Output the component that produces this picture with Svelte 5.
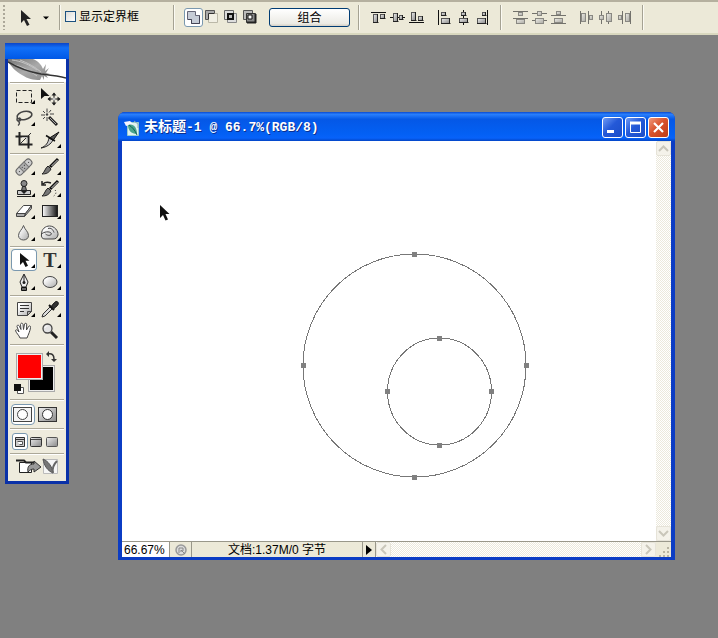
<script>
  const tri = '<path d="M24 15v4h-4z" fill="#000"/>';
  const brush = '<path d="M21 3l-8 8" stroke="#111" stroke-width="3"/><path d="M20.500 4l-6 6" stroke="#ddd"/><path d="M11 10l3 3c-2 4-5 5-9 5 3-2 3-6 6-8z" fill="#777" stroke="#222"/>';

  const tools = [
    [
      { name: '矩形选框', art: '<rect x="5.500" y="5.500" width="15" height="12" fill="none" stroke="#222" stroke-dasharray="4 2"/>' + tri },
      { name: '移动', art: '<path d="M4 3v11l3.500-3h5z" fill="#111"/><path d="M17 8v12M11 14h12" stroke="#111"/><path d="M17 7.500l-2.500 3h5zM17 20.500l-2.500-3h5zM10.500 14l3-2.500v5zM23.500 14l-3-2.500v5z" fill="#222"/><path d="M15.500 14h3M17 12.500v3" stroke="#eee"/>' },
      { name: '套索', art: '<ellipse cx="13.500" cy="8.500" rx="7.500" ry="4" transform="rotate(-12 13.500 8.500)" fill="none" stroke="#444" stroke-width="1.600"/><path d="M7 11c-2 1-1 3 1 3s2-3 0-3M7 14c2 1 2 3 0 4.500" fill="none" stroke="#444" stroke-width="1.400"/>' + tri },
      { name: '魔棒', art: '<path d="M12 10l8 8" stroke="#222" stroke-width="3"/><path d="M13 11l6 6" stroke="#aaa"/><path d="M10 1.500v4M10 10v4M4 8h4M13 7h4M6 4l2 2M14 3l-2 2.500M6 12l2-2" stroke="#444"/><circle cx="10" cy="7.500" r="1.200" fill="#444"/>' },
      { name: '裁剪', art: '<path d="M8.500 3v12.500h13M4.500 7.500h13v12" fill="none" stroke="#222" stroke-width="2"/><path d="M20 4L9 15" stroke="#333"/><path d="M11 8.500h5v5" fill="none" stroke="#bbb"/>' },
      { name: '切片', art: '<path d="M4 19c6-1 10-4 12-8l-4-2c-1 5-3 8-8 10z" fill="#ccc" stroke="#222"/><path d="M12.500 9l3.500 2.500L22 3z" fill="#555" stroke="#111"/><path d="M9 6.500l9 5.500" stroke="#111" stroke-width="1.500"/>' + tri }
    ],
    [
      { name: '修复画笔', art: '<g transform="rotate(-45 13 11)"><rect x="3.500" y="7.500" width="19" height="7" rx="3" fill="#ccc" stroke="#666"/><rect x="9.500" y="7.500" width="7" height="7" fill="#b0b0b0" stroke="#777"/><path d="M6 11h1M11 10h1M14 10h1M12 12.500h1M19 11h1" stroke="#333"/></g>' + tri },
      { name: '画笔', art: brush + tri },
      { name: '仿制图章', art: '<circle cx="13" cy="5.500" r="3" fill="#888" stroke="#222"/><path d="M11.500 8.500h3l1 4h-5z" fill="#777" stroke="#222"/><path d="M6.500 12.500h13v4h-13z" fill="#ccc" stroke="#222"/><path d="M6 18.500h14" stroke="#222"/><path d="M10 13h6l-3 3z" fill="#222"/>' + tri },
      { name: '历史记录画笔', art: brush + '<path d="M14 5c-3-1-6-1-8 1M5 3v4h4" fill="none" stroke="#222" stroke-width="1.500"/><path d="M18 12c2 2 1 5-3 7" fill="none" stroke="#222" stroke-dasharray="1 2"/>' + tri },
      { name: '橡皮擦', art: '<path d="M5.500 13.500l7-8h8l-6 8z" fill="#fff" stroke="#444"/><path d="M5.500 13.500v3h8l1-3zM14.500 13.500l6-8v3l-7 8z" fill="#aaa" stroke="#444"/>' + tri },
      { name: '渐变', art: '<rect x="5.500" y="5.500" width="15" height="11" fill="url(#ramp)" stroke="#222"/>' + tri },
      { name: '模糊', art: '<path d="M12.500 3.500c1 4 5 6 5 10 0 6-10 6-10 0 0-4 4-6 5-10z" fill="url(#ball)" stroke="#555"/>' + tri },
      { name: '海绵', art: '<path d="M4.500 12c0-5 4-8 8-8 5 0 9 5 8.500 9-1 3-2 4-5 4H8c-3 0-4-2-3.500-5z" fill="url(#ball)" stroke="#444"/><path d="M5 11.500c4-2.500 9-2 9.500.5-1.500 2.500-5 1-6 0M11 6.500c3-1 5 1 6 4" fill="none" stroke="#444"/>' + tri }
    ],
    [
      { name: '路径选择', active: true, art: '<path d="M9 4v12l3-3 2.500 5 2.500-1.200-2.500-5h4z" fill="#111"/>' + tri },
      { name: '文字', letter: 'T', art: tri },
      { name: '钢笔', art: '<path d="M13 3c-1 3-3 5-4 8l2 5h4l2-5c-1-3-3-5-4-8z" fill="#eee" stroke="#222"/><path d="M13 4v7" stroke="#222"/><circle cx="13" cy="11.500" r="1.500" fill="#222"/><path d="M10.500 16.500h5v3h-5z" fill="#666" stroke="#111"/>' + tri },
      { name: '椭圆', art: '<ellipse cx="13" cy="11" rx="7" ry="5.500" fill="url(#ball)" stroke="#444"/>' + tri }
    ],
    [
      { name: '注释', art: '<path d="M6.500 4.500h14v9l-4 4h-10z" fill="url(#ball)" stroke="#444"/><path d="M9 7.500h9M9 10.500h9M9 13.500h4" stroke="#333"/><path d="M16.500 17.500v-4h4z" fill="#aaa" stroke="#444"/>' + tri },
      { name: '吸管', art: '<path d="M5 19l1-3 7-7 2 2-7 7z" fill="#ddd" stroke="#333"/><path d="M12 7l5 5" stroke="#111" stroke-width="2"/><path d="M14.500 8l3-3.500c2-2.500 5.500 0 3 3L17 10.500z" fill="#333" stroke="#111"/>' + tri },
      { name: '抓手', art: '<path d="M9 18c-1-3-4-5-4.500-7.500.5-1.500 2-.5 3.500 1.500L6 6.500C6 4.500 8 5 8.500 6.500L10 9.500l-.5-5c.5-2 2.200-1.500 2.500 0l.5 5 1-5.500c.8-1.500 2.500-.8 2.200.8L15.500 10l2-3.500c1-1.200 2.500-.5 2 1-.5 4-2 6.500-3.500 10.500z" fill="#fff" stroke="#444"/>' },
      { name: '缩放', art: '<path d="M14 12l6 6" stroke="#222" stroke-width="3"/><circle cx="10.500" cy="8.500" r="4.500" fill="#e4e4e4" stroke="#444" stroke-width="1.300"/><path d="M8 8c0-1.500 1-2 2.500-2" fill="none" stroke="#fff"/>' }
    ]
  ];

  const box = (x, y, w, h) => `<rect x="${x}.500" y="${y}.500" width="${w}" height="${h}" fill="url(#metal)" stroke="#555"/>`;
  const shade = (x, y, w, h) => `<path d="M${x} ${y + h}.500h${w + 1}.500M${x + w}.500 ${y}v${h + 1}" stroke="#222"/>`;

  const combine = [
    { name: '添加到形状区域', active: true, art: '<path d="M2.500 2.500h8v4h4v8h-8v-4h-4z" fill="#c6ccd6" stroke="#667"/><path d="M3 10.500h3.500v4h8v-8" fill="none" stroke="#445"/>' },
    { name: '从形状区域减去', art: '<path d="M1.500 1.500h9v3h-6v6h-3z" fill="#aaa" stroke="#555"/><path d="M4.500 4.500h9v9h-9z" fill="#f1efe4" stroke="#bbb8a8"/><path d="M4.500 10.500v-6h6" fill="none" stroke="#333"/>' },
    { name: '交叉形状区域', art: '<path d="M1.500 1.500h9v9h-9z" fill="#ddd" stroke="#666"/><path d="M4.500 4.500h9v9h-9z" fill="#ddd" stroke="#888"/><path d="M5 5h5v5H5z" fill="#bbb" stroke="#111" stroke-width="2"/>' },
    { name: '重叠形状区域除外', art: '<path d="M1.500 1.500h9v9h-9z" fill="#bbb" stroke="#555"/><path d="M4.500 4.500h9v9h-9z" fill="#888" stroke="#333"/><path d="M6 6h4v4H6z" fill="#fff" stroke="#111"/><path d="M5 13.500h9M13.500 5v9" stroke="#222" stroke-width="2"/>' }
  ];

  const alignGroups = [
    [
      { name: '顶对齐', art: '<path d="M1 3.500h15" stroke="#111"/>' + box(3, 5, 4, 8) + shade(3, 5, 4, 8) + box(10, 5, 4, 4) + shade(10, 5, 4, 4) },
      { name: '垂直居中对齐', art: '<path d="M1 8.500h15" stroke="#111"/>' + box(4, 4, 4, 8) + shade(4, 4, 4, 8) + box(10, 6, 3, 4) + shade(10, 6, 3, 4) },
      { name: '底对齐', art: '<path d="M1 13.500h15" stroke="#111"/>' + box(3, 3, 4, 8) + shade(3, 3, 4, 8) + box(10, 7, 4, 4) + shade(10, 7, 4, 4) }
    ],
    [
      { name: '左对齐', art: '<path d="M2.500 1v15" stroke="#111"/>' + box(5, 3, 4, 3) + shade(5, 3, 4, 3) + box(5, 9, 8, 5) + shade(5, 9, 8, 5) },
      { name: '水平居中对齐', art: '<path d="M8.500 1v15" stroke="#111"/>' + box(6, 3, 4, 3) + shade(6, 3, 4, 3) + box(4, 9, 8, 4) + shade(4, 9, 8, 4) },
      { name: '右对齐', art: '<path d="M13.500 1v15" stroke="#111"/>' + box(8, 3, 3, 3) + shade(8, 3, 3, 3) + box(3, 9, 8, 5) + shade(3, 9, 8, 5) }
    ]
  ];

  const distributeGroups = [
    [
      { name: '按顶分布', art: '<path d="M1 2.500h15M1 9.500h15" stroke="#333"/>' + box(6, 3, 4, 3) + box(4, 10, 8, 4) },
      { name: '垂直居中分布', art: '<path d="M1 4.500h15M1 11.500h15" stroke="#333"/>' + box(6, 2, 4, 4) + box(4, 9, 8, 5) },
      { name: '按底分布', art: '<path d="M1 6.500h15M1 14.500h15" stroke="#333"/>' + box(6, 2, 4, 3) + box(4, 9, 8, 4) }
    ],
    [
      { name: '按左分布', art: '<path d="M2.500 2v13M10.500 2v13" stroke="#333"/>' + box(3, 4, 4, 8) + box(11, 6, 3, 4) },
      { name: '水平居中分布', art: '<path d="M4.500 2v13M11.500 2v13" stroke="#333"/>' + box(2, 6, 4, 4) + box(9, 4, 5, 8) },
      { name: '按右分布', art: '<path d="M6.500 2v13M14.500 2v13" stroke="#333"/>' + box(2, 6, 3, 4) + box(9, 4, 4, 8) }
    ]
  ];

  const anchors = [
    [292, 113], [181, 224], [404, 224], [292, 336],
    [317, 197], [265, 250], [369, 250], [317, 304]
  ];

  let showBounds = $state(false);
  let zoom = $state('66.67%');
</script>

{#snippet iconGroup(items, dim)}
  <div class="group" class:dim>
    {#each items as item}
      <button class="op" class:active={item.active} aria-label={item.name} disabled={dim}>
        <svg width="17" height="17" viewBox="0 0 17 17" fill="none">{@html item.art}</svg>
      </button>
    {/each}
  </div>
{/snippet}

<svg class="defs" width="0" height="0" aria-hidden="true">
  <defs>
    <linearGradient id="ramp"><stop offset="0" stop-color="#fff" /><stop offset="1" stop-color="#111" /></linearGradient>
    <linearGradient id="metal" x1="0" y1="0" x2="1" y2="1"><stop offset="0" stop-color="#eee" /><stop offset="1" stop-color="#888" /></linearGradient>
    <linearGradient id="ball" x1="0" y1="0" x2="1" y2="1"><stop offset="0.2" stop-color="#fff" /><stop offset="1" stop-color="#aaa" /></linearGradient>
    <linearGradient id="vane" x1="0" y1="0" x2="1" y2="1"><stop offset="0" stop-color="#777" /><stop offset="0.5" stop-color="#aaa" /><stop offset="1" stop-color="#888" /></linearGradient>
  </defs>
</svg>

<div class="app">
  <header class="options">
    <span class="grip"></span>
    <button class="preset" aria-label="工具预设">
      <svg width="32" height="18" viewBox="0 0 32 18">
        <path d="M2 1v13l3-3 3 6 2.500-1.200-3-5.800h4.500z" fill="#222" />
        <path d="M24 7.500h6l-3 3z" fill="#000" />
      </svg>
    </button>
    <span class="sep"></span>
    <label class="check"><input type="checkbox" bind:checked={showBounds} />显示定界框</label>
    <span class="sep"></span>
    {@render iconGroup(combine, false)}
    <button class="merge">组合</button>
    <span class="sep"></span>
    {#each alignGroups as g}{@render iconGroup(g, false)}{/each}
    <span class="sep"></span>
    {#each distributeGroups as g}{@render iconGroup(g, true)}{/each}
    <span class="sep"></span>
  </header>

  <main class="desk">
    <aside class="toolbox">
      <div class="tbar"></div>
      <svg class="feather" width="58" height="23" viewBox="0 0 58 23">
        <rect width="58" height="23" fill="#fff" />
        <path d="M0 0h25c5 2 8 5 10 10l3-5-1 7 4-3-3 5 4 1-4 1 2 3-4-2v4l-2-4-2 4c-7 0-12-1-18-5C7 12 4 8 0 3z" fill="url(#vane)" />
        <path d="M6 6c7 1 15 5 23 11M12 1c8 3 15 7 21 12M4 1c9 1 18 5 25 10" fill="none" stroke="#c4c4c4" />
        <path d="M0 3c10 6 20 10 33 12 8 1 17 2 25 4" fill="none" stroke="#333" stroke-width="1.500" />
      </svg>
      {#each tools as section}
        <div class="section grid">
          {#each section as tool}
            <button class="tool" class:on={tool.active} aria-label={tool.name}>
              {#if tool.letter}<span class="letter">{tool.letter}</span>{/if}
              <svg width="26" height="22" viewBox="0 0 26 22" fill="none">{@html tool.art}</svg>
            </button>
          {/each}
        </div>
      {/each}
      <div class="section colors">
        <button class="swatch back" aria-label="背景色"></button>
        <button class="swatch fore" aria-label="前景色"></button>
        <button class="swap" aria-label="切换颜色">
          <svg width="11" height="11" viewBox="0 0 11 11"><path d="M2 3c4-1 6 1 6 5" fill="none" stroke="#333" stroke-width="1.500" /><path d="M0 3l3-3v6zM8 11L5 8h6z" fill="#333" /></svg>
        </button>
        <button class="reset" aria-label="默认颜色">
          <svg width="11" height="11" viewBox="0 0 11 11"><path d="M3.500 3.500h6v6h-6z" fill="#fff" stroke="#555" /><path d="M0 0h7v7H0z" fill="#111" /></svg>
        </button>
      </div>
      <div class="section masks">
        <button class="mask on" aria-label="标准模式">
          <svg width="20" height="15" viewBox="0 0 20 15"><rect x=".5" y=".5" width="18" height="14" fill="#f4f4f4" stroke="#444" /><circle cx="9.500" cy="7.500" r="5" fill="#fff" stroke="#444" /></svg>
        </button>
        <button class="mask" aria-label="快速蒙版模式">
          <svg width="20" height="15" viewBox="0 0 20 15"><rect x=".5" y=".5" width="18" height="14" fill="url(#metal)" stroke="#333" /><circle cx="9.500" cy="7.500" r="5" fill="#fff" stroke="#333" /></svg>
        </button>
      </div>
      <div class="section modes">
        <button class="mode on" aria-label="标准屏幕模式">
          <svg width="12" height="12" viewBox="0 0 12 12"><path d="M1.500 1.500h9v9h-9z" fill="#ccc" stroke="#333" /><path d="M2 3.500h8" stroke="#333" /><path d="M3.500 5.500h5v3h-3" fill="#fff" stroke="#555" /></svg>
        </button>
        <button class="mode" aria-label="带菜单栏的全屏模式">
          <svg width="12" height="12" viewBox="0 0 12 12"><rect x=".5" y="1.500" width="11" height="9" rx="1" fill="url(#metal)" stroke="#333" /><path d="M1 3.500h10" stroke="#444" /></svg>
        </button>
        <button class="mode" aria-label="全屏模式">
          <svg width="12" height="12" viewBox="0 0 12 12"><rect x=".5" y="1.500" width="11" height="9" rx="1" fill="url(#metal)" stroke="#555" /></svg>
        </button>
      </div>
      <div class="section jump">
        <button aria-label="在 ImageReady 中编辑">
          <svg width="44" height="18" viewBox="0 0 44 18">
            <path d="M4.500 4.500h12v10h-12z" fill="#fff" stroke="#222" />
            <path d="M1 2.500h8l2 2h9" fill="none" stroke="#222" stroke-width="2" />
            <path d="M13 14c-1-5 1-8 6-8V3l7 6-7 5v-3c-3 0-4 1-6 3z" fill="#999" stroke="#333" />
            <path d="M28.500 1.500h14v14h-14z" fill="#f6f6f6" stroke="#bbb" />
            <path d="M28 1c5 2 9 7 10 14-5-2-9-7-10-14z" fill="#777" stroke="#555" />
            <path d="M38 15c-1-4 0-8 4-12" fill="none" stroke="#666" stroke-width="2" />
          </svg>
        </button>
      </div>
    </aside>

    <section class="window">
      <div class="title">
        <svg width="16" height="16" viewBox="0 0 16 16">
          <path d="M3.500 2.500h11v13h-11z" fill="#dff2ee" stroke="#9cc" /><path d="M0 2l6-1 3 3-7 2z" fill="#f5f5ff" />
          <path d="M4 5c5-2 9 2 9 9-6 0-9-4-9-9z" fill="#4aa58c" /><path d="M5 5c3 2 6 5 8 10" fill="none" stroke="#146054" />
          <path d="M10 1l4 3v4" fill="none" stroke="#8ab" />
        </svg>
        <h1><span>未标题</span>-1 @ 66.7%(RGB/8)</h1>
        <button class="wb" aria-label="最小化"><svg width="19" height="19" viewBox="0 0 19 19"><path d="M4 12h7v3H4z" fill="#fff" /></svg></button>
        <button class="wb" aria-label="最大化"><svg width="19" height="19" viewBox="0 0 19 19"><path d="M4.500 5h10v9.500h-10z" fill="none" stroke="#fff" /><path d="M4 5h11" stroke="#fff" stroke-width="3" /></svg></button>
        <button class="wb close" aria-label="关闭"><svg width="19" height="19" viewBox="0 0 19 19"><path d="M5 5l9 9M14 5l-9 9" stroke="#fff" stroke-width="2.200" /></svg></button>
      </div>
      <div class="body">
        <div class="canvas">
          <svg width="500" height="380" viewBox="0 0 500 380" fill="none">
            <g stroke="#777" shape-rendering="crispEdges">
              <circle cx="292.500" cy="224.500" r="111.500" />
              <ellipse cx="317.500" cy="250.500" rx="52" ry="53.500" />
            </g>
            {#each anchors as [x, y]}
              <rect x={x - 2} y={y - 2} width="5" height="5" fill="#808080" />
            {/each}
            <path d="M38 64v13l3-3 2.500 5.500 2.500-1-2.500-5.500h4z" fill="#111" />
          </svg>
        </div>
        <div class="vscroll">
          <button class="sb" disabled aria-label="向上滚动"><svg width="11" height="11" viewBox="0 0 11 11"><path d="M1 8l4.500-4.500L10 8" /></svg></button>
          <button class="sb" disabled aria-label="向下滚动"><svg width="11" height="11" viewBox="0 0 11 11"><path d="M1 3l4.500 4.500L10 3" /></svg></button>
        </div>
      </div>
      <footer class="status">
        <input class="zoom" type="text" aria-label="缩放比例" bind:value={zoom} />
        <button class="cell info" aria-label="版本状态"><svg width="12" height="12" viewBox="0 0 12 12"><circle cx="6" cy="6" r="5" fill="#ddd" stroke="#999" stroke-width="1.500" /><path d="M4 9V4h4v3H5M6 6l4 4" fill="none" stroke="#888" /></svg></button>
        <span class="doc">文档:1.37M/0 字节</span>
        <button class="cell more" aria-label="状态栏选项"><svg width="6" height="10" viewBox="0 0 6 10"><path d="M0 0l6 5-6 5z" /></svg></button>
        <div class="hscroll">
          <button class="sb" disabled aria-label="向左滚动"><svg width="11" height="11" viewBox="0 0 11 11"><path d="M8 1L3.500 5.500 8 10" /></svg></button>
          <button class="sb" disabled aria-label="向右滚动"><svg width="11" height="11" viewBox="0 0 11 11"><path d="M3 1l4.500 4.500L3 10" /></svg></button>
        </div>
        <svg class="corner" width="15" height="15" viewBox="0 0 15 15"><path d="M11 5h2v2h-2zM11 9h2v2h-2zM11 13h2v2h-2zM7 9h2v2H7zM7 13h2v2H7zM3 13h2v2H3z" fill="#b8b4a2" /></svg>
      </footer>
    </section>
  </main>
</div>

<style>
  :global(body) { margin: 0; background: #808080; }
  .app {
    min-height: 100vh;
    display: flex;
    flex-direction: column;
    font: 12px/16px "Liberation Sans", "Noto Sans CJK SC", sans-serif;
    color: #000;
  }
  .defs { position: absolute; }
  button, input { font: inherit; color: inherit; margin: 0; padding: 0; box-sizing: border-box; }
  button { border: 0; background: none; display: flex; align-items: center; justify-content: center; }
  svg { display: block; flex: none; }

  .options {
    height: 35px;
    box-sizing: border-box;
    display: flex;
    align-items: center;
    padding-left: 3px;
    background: #ece9d8;
    border-top: 2px solid #b5b09f;
    border-bottom: 2px solid #d9d8bf;
    white-space: nowrap;
  }
  .grip { width: 2px; height: 25px; background: repeating-linear-gradient(#aca899 0 2px, transparent 2px 4px); }
  .preset { margin-left: 14px; width: 32px; }
  .sep { width: 1px; height: 25px; background: #a5a293; box-shadow: 1px 0 #fbfaf3; margin-left: 8px; }
  .check { display: flex; align-items: center; gap: 3px; padding: 0 26px 2px 5px; }
  .check input { appearance: none; width: 11px; height: 11px; border: 1px solid #1c5180; background: linear-gradient(135deg, #dcdcd7, #fff); }
  .check input:checked { background: #21a121; }
  .group { display: flex; margin-left: 9px; }
  .sep + .group { margin-left: 10px; }
  .op { width: 19px; height: 19px; border: 1px solid transparent; border-radius: 3px; }
  .op.active { background: #fff; border-color: #7a98af; }
  .dim { opacity: 0.65; }
  .merge {
    width: 81px;
    height: 19px;
    margin-left: 9px;
    border: 1px solid #003c74;
    border-radius: 3px;
    background: linear-gradient(#fff, #ecebe5 85%, #d6d0c5);
  }

  .desk { flex: 1; position: relative; min-height: 600px; background: #808080; }

  .toolbox {
    position: absolute;
    left: 5px;
    top: 8px;
    width: 64px;
    box-sizing: border-box;
    border: 3px solid #0a31a8;
    border-top: 0;
    background: #eeebdd;
  }
  .tbar { height: 16px; margin: 0 -3px; background: linear-gradient(#0a45c8, #1170f8 30%, #0058e6); }
  .section { border-top: 1px solid #aca899; box-shadow: inset 0 1px #fff; margin: 0 2px; padding: 2px 1px; }
  .grid { display: grid; grid-template-columns: 26px 26px; }
  .tool { height: 22px; position: relative; }
  .tool.on svg { background: #fff; border-radius: 4px; box-shadow: inset 0 0 0 1px #7a98af; }
  .letter { position: absolute; inset: 0; font: bold 20px/22px "Liberation Serif", serif; color: #333; text-align: center; }
  .colors { height: 50px; position: relative; }
  .swatch { position: absolute; width: 27px; height: 27px; border: 2px solid #eee; outline: 1px solid #aaa; outline-offset: -1px; }
  .fore { left: 6px; top: 8px; background: #f00; }
  .back { left: 18px; top: 20px; background: #000; }
  .swap { position: absolute; left: 36px; top: 6px; }
  .reset { position: absolute; left: 4px; top: 39px; }
  .masks { display: flex; gap: 1px; padding: 4px 1px 3px; }
  .mask { width: 24px; height: 21px; border: 1px solid transparent; border-radius: 4px; }
  .modes { display: flex; gap: 0; padding: 4px 2px 3px; }
  .mode { width: 16px; height: 17px; border: 1px solid transparent; border-radius: 3px; }
  .on.mask, .on.mode { border-color: #7a98af; background: #fff; }
  .jump { padding: 4px 1px 5px; display: flex; justify-content: center; }

  .window {
    position: absolute;
    left: 118px;
    top: 77px;
    right: 43px;
    bottom: 78px;
    min-width: 540px;
    display: flex;
    flex-direction: column;
    box-sizing: border-box;
    padding: 0 4px 3px;
    background: #0b3cc4;
    border-radius: 7px 7px 0 0;
  }
  .title {
    height: 29px;
    flex: none;
    margin: 0 -4px;
    padding: 2px 6px 0;
    box-sizing: border-box;
    display: flex;
    align-items: center;
    gap: 2px;
    border-radius: 7px 7px 0 0;
    background: linear-gradient(#0a4ad0, #2a7ffc 8%, #0558e6 25%, #0360f4 75%, #0762fa 90%, #0345c5);
  }
  h1 {
    flex: 1;
    margin: 0 0 0 2px;
    color: #fff;
    font: bold 13px/20px "Liberation Mono", "Noto Sans CJK SC", monospace;
    text-shadow: 1px 1px #0b2f8f;
    white-space: nowrap;
  }
  h1 span { font-size: 14px; }
  .wb { width: 21px; height: 21px; border: 1px solid #fff; border-radius: 3px; background: linear-gradient(135deg, #6f9bf5, #2459d8 45%, #1b4dc8); }
  .close { background: linear-gradient(135deg, #f0997c, #d9532d 45%, #bf3c16); }
  .body { flex: 1; display: flex; min-height: 0; }
  .canvas { flex: 1; background: #fff; overflow: hidden; }
  .vscroll, .hscroll {
    display: flex;
    justify-content: space-between;
    background: repeating-conic-gradient(#ece9dc 0 25%, #fff 0 50%) 0 0 / 2px 2px;
  }
  .vscroll { width: 15px; flex-direction: column; }
  .hscroll { flex: 1; }
  .sb { width: 15px; height: 15px; background: #f4f2ea; border: 1px solid #e6e3d8; border-radius: 2px; }
  .sb path { fill: none; stroke: #c9c6ba; stroke-width: 2; }
  .status { height: 16px; flex: none; display: flex; background: #ece9d8; box-sizing: border-box; border-top: 1px solid #99978a; }
  .zoom { width: 47px; border: 0; padding-left: 2px; background: #fff; outline: 0; }
  .cell { border: solid #99978a; border-width: 0 1px; }
  .info { width: 23px; }
  .doc { width: 170px; text-align: center; line-height: 16px; }
  .more { width: 14px; }
</style>
